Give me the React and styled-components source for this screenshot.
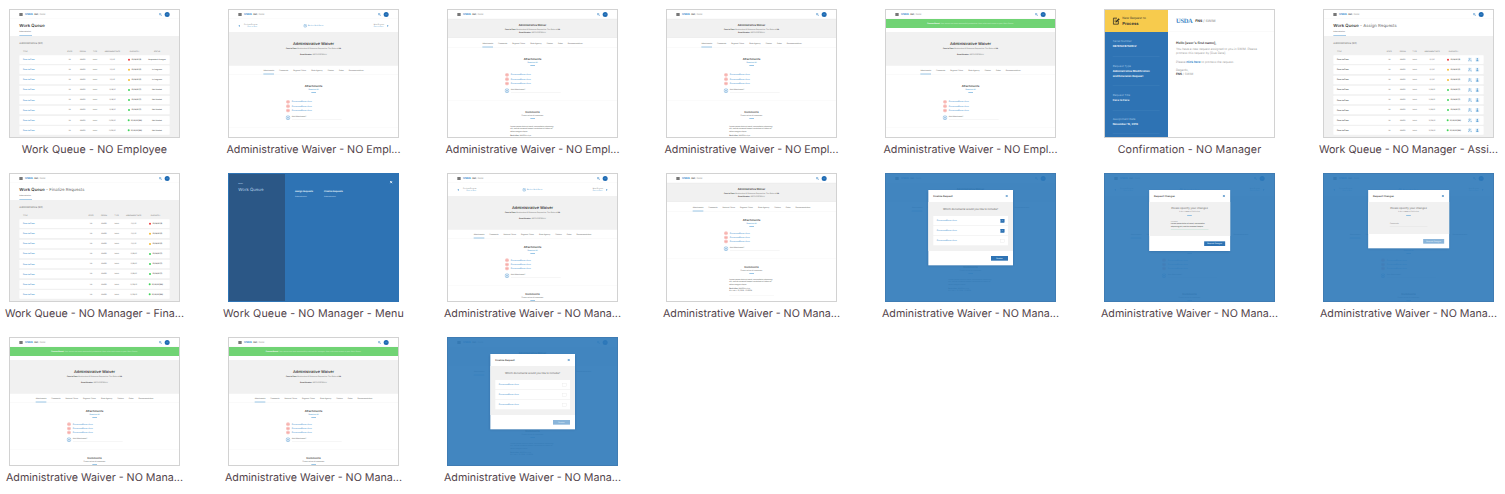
import React from "react";
import styled, { createGlobalStyle, css } from "styled-components";

const Global = createGlobalStyle`
  * { box-sizing: border-box; }
  body {
    margin: 0;
    background: #fff;
    overflow: hidden;
    font-family: Inter, "Liberation Sans", sans-serif;
    text-rendering: geometricPrecision;
  }
`;

const blue = "#2e73b4";
const link = "#4b98d2";

/* ---------- gallery ---------- */
const Gallery = styled.main`
  width: 1533px;
  height: 494px;
  padding-top: 9px;
  display: grid;
  grid-template-columns: repeat(7, 219px);
  grid-auto-rows: 164px;
`;
const Item = styled.figure`
  margin: 0;
  width: 189px;
  display: flex;
  flex-direction: column;
  align-items: center;
`;
const Frame = styled.div`
  width: 171px;
  height: 129px;
  flex: none;
  overflow: hidden;
  border: 1px solid ${(p) => p.$edge || "#d2d2d2"};
`;
/* Artboards are laid out at three times the thumbnail size. */
const Artboard = styled.div`
  position: relative;
  width: 507px;
  height: 381px;
  overflow: hidden;
  background: #fff;
  transform: scale(0.33333);
  transform-origin: 0 0;
  color: #777;
  font-weight: 500;
  white-space: nowrap;
`;
const Caption = styled.figcaption`
  margin-top: 4px;
  font-size: 10.7px;
  line-height: 15px;
  letter-spacing: ${(p) => (p.$tight ? 0 : 0.13)}px;
  color: #52434a;
  white-space: nowrap;
`;

/* ---------- shared pieces ---------- */
const Text = styled.div`
  font-size: ${(p) => p.$size}px;
  line-height: ${(p) => p.$line}px;
  font-weight: ${(p) => p.$weight || 500};
  color: ${(p) => p.$color || "inherit"};
  margin-top: ${(p) => p.$top || 0}px;
`;
const TopBar = styled.header`
  height: 27px;
  padding: 0 28px;
  display: flex;
  align-items: center;
  border-bottom: 1px solid #f3f3f3;
`;
const Burger = styled.span`
  width: 10px;
  height: 9px;
  background: repeating-linear-gradient(#777 0 2px, #bbb 2px 3px);
`;
const Brand = styled.span`
  margin-left: 7px;
  font-size: 8.4px;
  font-weight: 700;
  color: #3a8dcc;
`;
const Agency = styled.span`
  margin-left: 4px;
  flex: 1;
  font-size: 5.8px;
  color: #999;
  b { color: #444; }
`;
const Avatar = styled.span`
  width: 15px;
  height: 15px;
  margin-left: 8px;
  border-radius: 50%;
  background: #1f6bb3;
  color: #6ea5d6;
  font-size: 5px;
  line-height: 15px;
  text-align: center;
`;
const Accent = styled.div`
  width: 14px;
  height: 2px;
  margin: 3.5px auto 0;
  background: #69abdc;
`;

const Search = () => (
  <svg width="9" height="9" viewBox="0 0 9 9" fill="none" stroke="#3a86c6" strokeWidth="1.6">
    <circle cx="3.4" cy="3.4" r="2.5" />
    <path d="M5.3 5.3 8.4 8.4" />
  </svg>
);
const Cross = ({ color, size = 8 }) => (
  <svg width={size} height={size} viewBox="0 0 8 8" stroke={color} strokeWidth="2.1">
    <path d="M.8.8 7.2 7.2M7.2.8.8 7.2" />
  </svg>
);

const Header = () => (
  <TopBar>
    <Burger />
    <Brand>USDA</Brand>
    <Agency><b>FNS</b> / SWIM</Agency>
    <Search />
    <Avatar>JD</Avatar>
  </TopBar>
);

/* ---------- work queue ---------- */
const QueueHead = styled.div`
  height: 51px;
  padding: 11px 28px 0;
`;
const QueueTitle = styled.div`
  font-size: 12.8px;
  line-height: 18px;
  font-weight: 400;
  color: #666;
  b { color: #3a3a3a; font-weight: 600; }
`;
const QueueTab = styled.div`
  width: 38px;
  margin-top: 6px;
  height: 15px;
  font-size: 5.1px;
  line-height: 9px;
  border-bottom: 2px solid #7fb5de;
`;
const QueueBody = styled.div`
  height: 303px;
  padding: 15px 28px 0;
  background: #f1f1f1;
`;
const QueueRow = styled.div`
  display: grid;
  grid-template-columns: ${(p) => p.$cols};
  align-items: center;
  height: 26px;
  margin-bottom: 4.3px;
  font-size: 5.2px;
  text-align: center;
  background: #fff;
  border-radius: 2px;
  ${(p) => p.$head && css`
    height: 20px;
    margin: 7px 0 2px;
    font-size: 4.8px;
    background: none;
    color: #888;
  `}
`;
const TitleCell = styled.span`
  padding-left: 11px;
  text-align: left;
  ${(p) => p.$tone && css`font-size: 5.8px; font-weight: 600; color: ${p.$tone};`}
`;
const Due = styled.span`
  display: flex;
  align-items: center;
  justify-content: center;
  gap: 4px;
  font-weight: 700;
  color: #444;
`;
const Dot = styled.i`
  width: 6px;
  height: 6px;
  border-radius: 50%;
  background: ${(p) => p.$color};
`;
const Status = styled.span`
  font-size: 5.5px;
  color: #555;
`;
const Actions = styled.span`
  display: flex;
  gap: 10px;
  padding-left: 14.5px;
`;
const Action = styled.span`
  width: 12px;
  height: 12px;
  display: flex;
  background: #eaf3fa;
`;
const AssignIcon = () => (
  <Action>
    <svg width="12" height="12" viewBox="0 0 12 12" fill="none" stroke="#5c9fd3" strokeWidth="1.4">
      <circle cx="5" cy="3.4" r="2" />
      <path d="M1 11c0-5 6-5 7-2M8 10h4" />
    </svg>
  </Action>
);
const UserIcon = () => (
  <Action>
    <svg width="12" height="12" viewBox="0 0 12 12" fill="#6aa8d8">
      <circle cx="6" cy="3.3" r="2.2" />
      <path d="M4 5.5h4l1.5 5.5h-7z" />
    </svg>
  </Action>
);

const red = "#ee3a3a", amber = "#f5bd32", green = "#3fd45a";
const rowData = [
  ["11/1/16", red, "12/14/16 (3)", "Requested Changes"],
  ["11/1/16", amber, "12/14/16 (5)", "In Progress"],
  ["11/1/16", amber, "12/14/16 (5)", "In Progress"],
  ["11/18/16", green, "12/14/16 (7)", "Not Started"],
  ["11/18/16", green, "12/14/16 (7)", "Not Started"],
  ["11/18/16", green, "12/14/16 (7)", "Not Started"],
  ["11/20/16", green, "12/16/16 (30)", "Not Started"],
  ["11/20/16", green, "12/16/16 (30)", "Not Started"],
];
const columns = {
  employee: "131.5px 39px 39px 35px 69px 65px 69px",
  assign: "148.5px 39px 41px 31px 73px 57px 61px",
  finalize: "195.5px 39px 39px 37px 65px 67px",
};

const Queue = ({ kind, suffix }) => (
  <>
    <Header />
    <QueueHead>
      <QueueTitle><b>Work Queue</b>{suffix && ` - ${suffix}`}</QueueTitle>
      <QueueTab>Administrative</QueueTab>
    </QueueHead>
    <QueueBody>
      <Text $size={7.7} $line={14}>Administrative (32)</Text>
      <QueueRow $head $cols={columns[kind]}>
        <TitleCell>TITLE</TitleCell>
        <span>STATE</span><span>REGION</span><span>TYPE</span>
        <span>ASSIGNMENT DATE</span><span>DUE DATE ↑</span>
        {kind === "employee" && <span>STATUS</span>}
      </QueueRow>
      {rowData.map(([date, color, due, status], i) => (
        <QueueRow key={i} $cols={columns[kind]}>
          <TitleCell $tone={kind === "assign" ? "#444" : "#3f92d0"}>Face to Face</TitleCell>
          <span>VA</span><span>MARO</span><span>Initial</span><span>{date}</span>
          <Due><Dot $color={color} />{due}</Due>
          {kind === "employee" && <Status>{status}</Status>}
          {kind === "assign" && <Actions><AssignIcon /><UserIcon /></Actions>}
        </QueueRow>
      ))}
    </QueueBody>
  </>
);

/* ---------- waiver ---------- */
const Pager = styled.nav`
  height: 40px;
  padding: 0 28px;
  display: grid;
  grid-template-columns: 1fr auto 1fr;
  align-items: center;
  font-size: 4.8px;
  line-height: 6px;
`;
const Step = styled.div`
  display: flex;
  align-items: center;
  gap: ${(p) => (p.$side === "end" ? 9 : 12)}px;
  justify-self: ${(p) => p.$side};
  text-align: ${(p) => (p.$side === "end" ? "left" : "right")};
  em { display: block; font-style: normal; color: ${link}; }
`;
const Back = styled.div`
  display: flex;
  align-items: center;
  gap: 3px;
  color: ${link};
`;
const Chevron = ({ flip }) => (
  <svg width="5" height="7" viewBox="0 0 5 7" fill="#4b94cf">
    <path d={flip ? "M1 0 5 3.5 1 7z" : "M4 0 0 3.5 4 7z"} />
  </svg>
);
const Ring = ({ size }) => (
  <svg width={size} height={size} viewBox="0 0 14 14" fill="none" stroke="#5c9fd3" strokeWidth="1.6">
    <circle cx="7" cy="7" r="6" />
    <path d="M4 5.8h6M4 8.2h6" />
  </svg>
);
const Banner = styled.div`
  height: 27px;
  margin-bottom: 13px;
  background: #70d374;
  color: #c5efc7;
  font-size: 5.1px;
  line-height: 27px;
  text-align: center;
  b { color: #fff; }
`;
const Hero = styled.section`
  height: ${(p) => (p.$compact ? 57 : 99)}px;
  padding-top: ${(p) => (p.$compact ? 12 : 27)}px;
  background: #f1f1f1;
  border: solid #e9e9e9;
  border-width: 1px 0;
  text-align: center;
  color: #888;
  b { color: #444; }
`;
const Tabs = styled.nav`
  height: ${(p) => (p.$compact ? 29 : 28)}px;
  display: flex;
  justify-content: center;
  align-items: flex-end;
  gap: 15px;
  border-bottom: 1px solid #f1f1f1;
  font-size: 5.3px;
`;
const Tab = styled.span`
  height: 17px;
  line-height: 12px;
  border-bottom: 2px solid ${(p) => (p.$active ? "#69abdc" : "transparent")};
`;
const Section = styled.section`
  padding: ${(p) => p.$top}px 0 22px;
  border-bottom: 1px solid #f1f1f1;
  text-align: center;
`;
const Docs = styled.div`
  width: 168px;
  margin: ${(p) => (p.$tight ? 12 : 21)}px auto 0;
  text-align: left;
`;
const Doc = styled.div`
  height: 12.7px;
  display: flex;
  align-items: center;
  gap: 6px;
  font-size: 5.8px;
  color: #3f92d0;
`;
const PdfDot = styled.i`
  width: 12px;
  height: 11px;
  margin-left: 1px;
  border-radius: 50%;
  background: #f6aaa6;
  border: 3px double #fbd5d3;
`;
const AddDoc = styled.div`
  height: 14px;
  margin-top: 8px;
  display: flex;
  align-items: center;
  gap: 5px;
`;
const AddField = styled.span`
  flex: 1;
  height: 12px;
  font-size: 5.3px;
  line-height: 7px;
  border-bottom: 1px solid #e2e2e2;
`;
const Comment = styled.div`
  width: 134px;
  margin: ${(p) => (p.$tight ? 13 : 20)}px auto 0;
  padding-bottom: 12px;
  text-align: left;
  font-size: 5.3px;
  line-height: 7.3px;
  color: #6f6f6f;
  border-bottom: 1px solid #eee;
  footer { margin-top: 5px; font-size: 4.8px; line-height: 6.4px; }
  b { color: #444; }
`;

const Waiver = ({ compact, manager, banner }) => (
  <>
    <Header />
    {banner && <Banner><b>Process Saved.</b> {banner}</Banner>}
    {!compact && !banner && (
      <Pager>
        <Step $side="start"><Chevron /><span>Previous Request<em>Face to Face</em></span></Step>
        <Back><Ring size={11} />Back to Work Queue</Back>
        <Step $side="end"><span>Next Request<em>Face to Face</em></span><Chevron flip /></Step>
      </Pager>
    )}
    <Hero $compact={compact}>
      <Text $size={compact ? 7.8 : 11.6} $line={compact ? 13 : 15} $weight={600} $color="#3a3a3a">Administrative Waiver</Text>
      <Text $size={5.2} $line={compact ? 11 : 12}>
        <b>Face to Face</b> Modification & Extension Request for The State of <b>VA</b>
      </Text>
      <Text $size={5} $line={compact ? 11 : 12} $top={compact ? 0 : 6}><b>Serial Number:</b> 08761CFB7S2KLV</Text>
    </Hero>
    <Tabs $compact={compact}>
      <Tab $active>Attachments</Tab>
      <Tab>Comments</Tab>
      {manager && <Tab>National Office</Tab>}
      <Tab>Regional Office</Tab>
      <Tab>State Agency</Tab>
      <Tab>Citation</Tab>
      <Tab>Dates</Tab>
      <Tab>Recommendation</Tab>
    </Tabs>
    <Section $top={manager ? 20.5 : 29}>
      <Text $size={8.6} $line={10} $weight={600} $color="#3a3a3a">Attachments</Text>
      <Text $size={4.9} $line={10} $color={link}>Download All</Text>
      <Accent />
      <Docs $tight={manager}>
        {[0, 1, 2].map((n) => <Doc key={n}><PdfDot />DocumentName.docx</Doc>)}
        <AddDoc><Ring size={14} /><AddField>Add Attachment*</AddField></AddDoc>
      </Docs>
    </Section>
    {(compact || manager) && (
      <Section $top={manager ? 20.5 : 29}>
        <Text $size={8.2} $line={10} $weight={600} $color="#3a3a3a">Comments</Text>
        <Text $size={4.9} $line={10}>Please review all comments.</Text>
        <Accent />
        {compact && (
          <Comment $tight={manager}>
            Lorem ipsum dolor sit amet, consectetur adipiscing<br />
            elit, sed do eiusmod tempor incididunt ut labore et<br />
            dolore magna aliqua.
            <footer><b>David Jiles</b> / MARO Analyst<br />{manager && "November 15, 2016 - 12:00PM"}</footer>
          </Comment>
        )}
      </Section>
    )}
  </>
);

/* ---------- modals ---------- */
const Scrim = styled.div`
  position: absolute;
  inset: 0;
  background: rgba(45, 121, 185, 0.9);
`;
const Dialog = styled.div`
  position: absolute;
  top: 48px;
  left: 50%;
  width: ${(p) => p.$width}px;
  transform: translateX(-50%);
  background: #fff;
  box-shadow: 0 2px 7px rgba(0, 30, 70, 0.2);
`;
const DialogHead = styled.div`
  height: 36px;
  padding: 0 15px;
  display: flex;
  align-items: center;
  justify-content: space-between;
  font-size: 7.4px;
  font-weight: 600;
  color: #3a3a3a;
`;
const DialogBody = styled.div`
  height: ${(p) => p.$height}px;
  padding: ${(p) => p.$top}px 15px 0;
  background: #f1f1f1;
  text-align: center;
`;
const DialogFoot = styled.div`
  height: ${(p) => p.$height}px;
  padding: 0 15px;
  display: flex;
  align-items: center;
  justify-content: flex-end;
`;
const Button = styled.span`
  width: ${(p) => p.$width}px;
  height: 14px;
  background: ${(p) => (p.$off ? "#8ab5da" : blue)};
  color: #d8e8f5;
  font-size: 5.2px;
  font-weight: 600;
  line-height: 14px;
  text-align: center;
`;
const Choices = styled.div`
  margin-top: 14px;
`;
const Choice = styled.div`
  height: 28px;
  margin-top: 2px;
  padding: 0 11px;
  display: flex;
  align-items: center;
  justify-content: space-between;
  background: #fff;
  font-size: 5.8px;
  color: #3f92d0;
`;
const Check = styled.i`
  width: 11px;
  height: 11px;
  padding: 2.5px;
  border: 1px solid ${(p) => (p.$on ? blue : "#e4e4e4")};
  background: ${(p) => (p.$on ? blue : "#fff")};
  svg { display: block; }
`;
const Field = styled.div`
  width: 113px;
  margin: ${(p) => p.$top}px auto 0;
  padding-bottom: 4px;
  text-align: left;
  font-size: 5.3px;
  line-height: 8px;
  color: ${(p) => (p.$empty ? "#999" : "#555")};
  border-bottom: 1px solid ${(p) => (p.$empty ? "#ddd" : "#a9d3c5")};
  small { display: block; font-size: 4px; line-height: 6px; color: #999; }
`;

const FinalizeDialog = ({ picked }) => (
  <>
    <Waiver compact manager />
    <Scrim />
    <Dialog $width={254}>
      <DialogHead>Finalize Request<Cross color="#2f7bbd" /></DialogHead>
      <DialogBody $height={147} $top={12}>
        <Text $size={7.8} $line={16}>Which documents would you like to include?</Text>
        <Choices>
          {[0, 1, 2].map((n) => (
            <Choice key={n}>
              DocumentName.docx
              <Check $on={n < picked}>
                {n < picked && (
                  <svg width="4" height="4" viewBox="0 0 4 4" fill="none" stroke="#fff"><path d="m0 2 1.5 1.5L4 .5" /></svg>
                )}
              </Check>
            </Choice>
          ))}
        </Choices>
      </DialogBody>
      <DialogFoot $height={43}><Button $width={51} $off={!picked}>Finalize</Button></DialogFoot>
    </Dialog>
  </>
);
const ChangesDialog = ({ empty }) => (
  <>
    <Waiver manager />
    <Scrim />
    <Dialog $width={243}>
      <DialogHead>Request Changes<Cross color="#2f7bbd" /></DialogHead>
      <DialogBody $height={empty ? 96 : 102} $top={13}>
        <Text $size={8} $line={12}>Please specify your changes</Text>
        <Text $size={4.8} $line={10}>in the comment field below</Text>
        <Accent />
        {empty
          ? <Field $empty $top={20}>Comments</Field>
          : (
            <Field $top={14}>
              <small>Comments</small>
              Lorem ipsum dolor sit amet, consectetur<br />
              adipiscing elit, sed do eiusmod tempor
            </Field>
          )}
      </DialogBody>
      <DialogFoot $height={empty ? 43 : 45}><Button $width={63} $off={empty}>Request Changes</Button></DialogFoot>
    </Dialog>
  </>
);

/* ---------- menu ---------- */
const MenuPage = styled.div`
  height: 381px;
  display: flex;
  background: ${blue};
  color: #b9d4ec;
`;
const MenuSide = styled.div`
  width: 168px;
  padding: 27px 28px;
  background: #2b5786;
`;
const MenuLinks = styled.div`
  flex: 1;
  padding: 44px 0 0 30px;
  display: flex;
  gap: 33px;
`;
const MenuClose = styled.div`
  padding: 13px 16px;
`;

const Menu = () => (
  <MenuPage>
    <MenuSide>
      <Text $size={4.6} $line={8}>MENU</Text>
      <Text $size={12.8} $line={18} $top={5} $weight={400}>Work Queue</Text>
    </MenuSide>
    <MenuLinks>
      <div>
        <Text $size={6.6} $line={14} $weight={700} $color="#e9f3fb">Assign Requests</Text>
        <Text $size={5.1} $line={10} $top={4}>Administrative</Text>
      </div>
      <div>
        <Text $size={6.6} $line={14} $weight={700} $color="#e9f3fb">Finalize Requests</Text>
        <Text $size={5.1} $line={10} $top={4}>Administrative</Text>
      </div>
    </MenuLinks>
    <MenuClose><Cross color="#fff" size={9} /></MenuClose>
  </MenuPage>
);

/* ---------- confirmation mail ---------- */
const Mail = styled.div`
  height: 381px;
  display: grid;
  grid-template-columns: 189px 1fr;
  grid-template-rows: 66px 1fr;
`;
const MailFlag = styled.div`
  display: flex;
  align-items: center;
  gap: 7px;
  padding-left: 23px;
  background: #f7cb4d;
  color: #5d5334;
`;
const MailBrand = styled.div`
  display: flex;
  align-items: center;
  gap: 8px;
  padding-left: 24px;
  border-bottom: 1px solid #eee;
  font-size: 10.6px;
  color: #999;
  b { color: #333; }
`;
const Usda = styled.span`
  font-family: "Liberation Serif", serif;
  font-size: 19.5px;
  font-weight: 700;
  letter-spacing: -0.9px;
  color: #3b86c6;
`;
const MailFacts = styled.div`
  padding: 0 25px 0 23px;
  background: ${blue};
`;
const Fact = styled.div`
  height: ${(p) => p.$height}px;
  padding-top: ${(p) => p.$top}px;
  border-bottom: 1px solid #4886c0;
  font-size: 8.2px;
  line-height: 13px;
  font-weight: 700;
  color: #eef5fb;
  span { display: block; line-height: 16px; font-size: 8.5px; font-weight: 400; color: #9bc1e2; }
`;
const MailBody = styled.div`
  padding: 25px 0 0 24px;
  font-size: 9px;
  line-height: 12.5px;
  font-weight: 400;
  color: #999;
  p { margin: 0 0 13px; }
  a { color: #2f83c8; font-weight: 700; }
  b { color: #444; }
`;
const NoteIcon = () => (
  <svg width="22" height="24" viewBox="0 0 22 24" fill="none" stroke="#2c2a25" strokeWidth="2.4">
    <path d="M17 12v9.5H2V3.5h11" />
    <path d="M5.5 9.5h6M5.5 13.5h3" strokeWidth="1.6" />
    <path d="m9 16 1-3.5 8-8 2.5 2.5-8 8z" fill="#2c2a25" strokeWidth="1" />
  </svg>
);
const Confirmation = () => (
  <Mail>
    <MailFlag>
      <NoteIcon />
      <div>
        <Text $size={9.4} $line={14}>New Request to</Text>
        <Text $size={12.4} $line={17} $weight={700} $color="#3d3a30">Process</Text>
      </div>
    </MailFlag>
    <MailBrand><Usda>USDA</Usda><span><b>FNS</b> / SWIM</span></MailBrand>
    <MailFacts>
      <Fact $height={74} $top={21}><span>Serial Number</span>08761CFB7S2KLV</Fact>
      <Fact $height={87} $top={22}><span>Request Type</span>Administrative Modification<br />and Extension Request</Fact>
      <Fact $height={75} $top={22}><span>Request Title</span>Face to Face</Fact>
      <Fact $height={70} $top={18}><span>Assignment Date</span>November 16, 2016</Fact>
    </MailFacts>
    <MailBody>
      <Text $size={10} $line={14} $weight={700} $color="#444">Hello [user's first name],</Text>
      <Text $size={9} $line={12.5} $weight={400} $top={7}>
        You have a new request assigned to you in SWIM. Please
      </Text>
      <p>process this request by [Due Date].</p>
      <p>Please <a>click here</a> to process the request.</p>
      <p>Regards,<br /><b>FNS</b> / SWIM</p>
    </MailBody>
  </Mail>
);

const emp = "Administrative Waiver - NO Empl...";
const mana = "Administrative Waiver - NO Mana...";
const dim = "#3f7cb3";
const success = "Your waiver has been successfully submitted. Here is the next waiver in your Work Queue.";
const changes = "Your waiver has been successfully returned for changes. Here is the next waiver in your Work Queue.";

const screens = [
  ["Work Queue - NO Employee", <Queue kind="employee" />],
  [emp, <Waiver />],
  [emp, <Waiver compact />],
  [emp, <Waiver compact />],
  [emp, <Waiver banner={success} />],
  ["Confirmation - NO Manager", <Confirmation />],
  ["Work Queue - NO Manager - Assi...", <Queue kind="assign" suffix="Assign Requests" />],
  ["Work Queue - NO Manager - Fina...", <Queue kind="finalize" suffix="Finalize Requests" />],
  ["Work Queue - NO Manager - Menu", <Menu />, blue],
  [mana, <Waiver manager />],
  [mana, <Waiver compact manager />],
  [mana, <FinalizeDialog picked={2} />, dim],
  [mana, <ChangesDialog />, dim],
  [mana, <ChangesDialog empty />, dim],
  [mana, <Waiver manager banner={success} />],
  [mana, <Waiver manager banner={changes} />],
  [mana, <FinalizeDialog picked={0} />, dim],
];

export default function App() {
  return (
    <>
      <Global />
      <Gallery>
        {screens.map(([caption, screen, edge], i) => (
          <Item key={i}>
            <Frame $edge={edge}><Artboard>{screen}</Artboard></Frame>
            <Caption $tight={caption.endsWith("...")}>{caption}</Caption>
          </Item>
        ))}
      </Gallery>
    </>
  );
}
